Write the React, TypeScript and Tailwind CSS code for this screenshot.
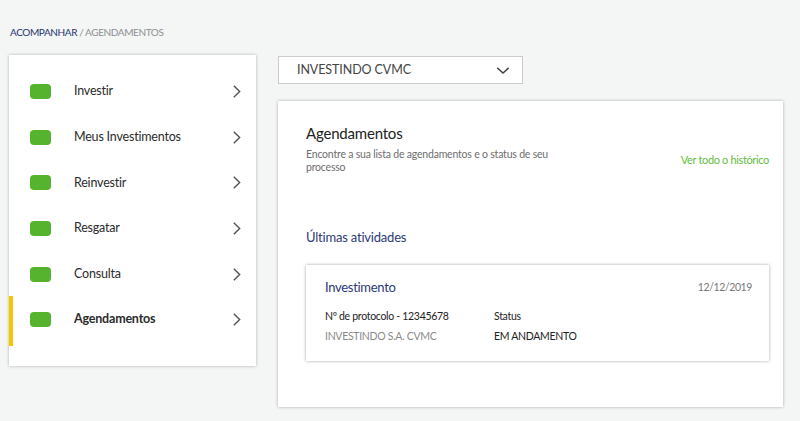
import React from 'react';

const menu = ['Investir', 'Meus Investimentos', 'Reinvestir', 'Resgatar', 'Consulta', 'Agendamentos'];

const Chevron = ({ className }: { className?: string }) => (
  <svg viewBox="0 0 10 16" className={className} fill="none" stroke="currentColor" strokeWidth="1.6">
    <path d="M2 1.5 L8.5 8 L2 14.5" />
  </svg>
);

export default function App() {
  const active = 'Agendamentos';
  return (
    <div className="w-[800px] h-[421px] bg-[#f4f5f5] font-['Lato',sans-serif] overflow-hidden">
      {/* Breadcrumb */}
      <div className="pl-[10px] pt-[26px] text-[10px] tracking-[-0.4px] leading-[12px]">
        <span className="text-[#27346b]">ACOMPANHAR</span>
        <span className="text-[#8c8f93]"> / AGENDAMENTOS</span>
      </div>

      <div className="flex gap-[22px] pl-[9px] pt-[17px]">
        {/* Side menu */}
        <div className="w-[247px] h-[311px] bg-white shadow-[0_0_3px_rgba(0,0,0,0.28)] self-start pt-[14px]">
          {menu.map((item) => {
            const isActive = item === active;
            return (
              <div key={item} className="relative h-[45.6px] flex items-center">
                {isActive && <div className="absolute left-0 top-[-1px] h-[50px] w-[4px] bg-[#f7c600]" />}
                <div className="ml-[21px] w-[21px] h-[15px] rounded-[4px] bg-[#55b32e]" />
                <span
                  className={`ml-[23px] flex-1 text-[12.5px] tracking-[-0.2px] text-[#2b2b2b] ${isActive ? 'font-bold' : ''}`}
                >
                  {item}
                </span>
                <Chevron className="w-[9px] h-[15px] mr-[15px] text-[#555]" />
              </div>
            );
          })}
        </div>

        {/* Main area */}
        <div className="flex flex-col">
          <div className="w-[245px] h-[28px] mt-[1px] bg-white border border-[#c9cbcd] flex items-center pl-[18px] pr-[12px]">
            <span className="flex-1 text-[12.5px] tracking-[-0.1px] text-[#444]">INVESTINDO CVMC</span>
            <svg viewBox="0 0 16 10" className="w-[14px] h-[9px] text-[#444]" fill="none" stroke="currentColor" strokeWidth="1.6">
              <path d="M1.5 2 L8 8 L14.5 2" />
            </svg>
          </div>

          <div className="mt-[17px] w-[505px] h-[306px] bg-white shadow-[0_0_3px_rgba(0,0,0,0.3)] px-[28px] pt-[22px]">
            <div className="text-[15px] tracking-[-0.2px] text-[#222] leading-[20px]">Agendamentos</div>
            <div className="flex items-start justify-between mt-[5px]">
              <p className="w-[255px] text-[10.5px] leading-[13px] tracking-[-0.2px] text-[#6e6e6e]">
                Encontre a sua lista de agendamentos e o status de seu processo
              </p>
              <span className="mt-[4px] mr-[-14px] text-[11px] tracking-[-0.35px] text-[#62bd3c]">Ver todo o histórico</span>
            </div>

            <div className="mt-[55px] text-[13px] tracking-[-0.2px] text-[#2b3a78] leading-[16px]">Últimas atividades</div>

            <div className="mt-[20px] w-[463px] h-[96px] bg-white shadow-[0_0_3px_rgba(0,0,0,0.35)] px-[19px] pt-[13px]">
              <div className="flex items-center justify-between">
                <span className="text-[13px] tracking-[-0.3px] text-[#2b3a78]">Investimento</span>
                <span className="text-[10.5px] tracking-[-0.4px] text-[#777] mr-[-2px]">12/12/2019</span>
              </div>
              <div className="mt-[11px] grid grid-cols-[169px_1fr] gap-y-[6px] text-[10.5px] tracking-[-0.3px] leading-[14px]">
                <span className="text-[#222]">Nº de protocolo - 12345678</span>
                <span className="text-[#222]">Status</span>
                <span className="text-[#8a8a8a]">INVESTINDO S.A. CVMC</span>
                <span className="text-[#222]">EM ANDAMENTO</span>
              </div>
            </div>
          </div>
        </div>
      </div>
    </div>
  );
}
